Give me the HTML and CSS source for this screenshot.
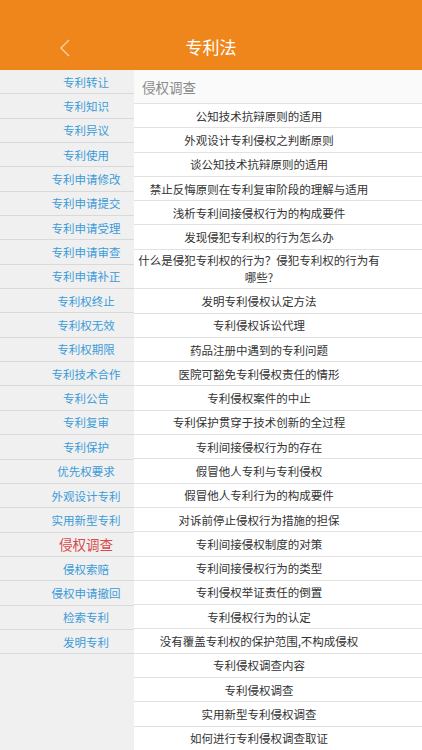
FILE: index.html
```html
<!DOCTYPE html>
<html lang="zh-CN">
<head>
  <meta charset="UTF-8" />
  <title>专利法</title>
  <link rel="stylesheet" href="styles.css">
</head>
<body>
  <div class="topbar">
    <button class="back-btn">
      <svg width="12" height="18" viewBox="0 0 12 18"><polyline points="10,1 2,9 10,17" fill="none" stroke="#f8cf9e" stroke-width="1.4"/></svg>
    </button>
    <div class="title">专利法</div>
  </div>

  <div class="main">
    <!-- 左侧分类 -->
    <div class="sidebar">
      <div class="cat">专利转让</div>
      <div class="cat">专利知识</div>
      <div class="cat">专利异议</div>
      <div class="cat">专利使用</div>
      <div class="cat">专利申请修改</div>
      <div class="cat">专利申请提交</div>
      <div class="cat">专利申请受理</div>
      <div class="cat">专利申请审查</div>
      <div class="cat">专利申请补正</div>
      <div class="cat">专利权终止</div>
      <div class="cat">专利权无效</div>
      <div class="cat">专利权期限</div>
      <div class="cat">专利技术合作</div>
      <div class="cat">专利公告</div>
      <div class="cat">专利复审</div>
      <div class="cat">专利保护</div>
      <div class="cat">优先权要求</div>
      <div class="cat">外观设计专利</div>
      <div class="cat">实用新型专利</div>
      <div class="cat active">侵权调查</div>
      <div class="cat">侵权索赔</div>
      <div class="cat">侵权申请撤回</div>
      <div class="cat">检索专利</div>
      <div class="cat">发明专利</div>
    </div>

    <!-- 右侧文章列表 -->
    <div class="content">
      <div class="section-title">侵权调查</div>
      <div class="item">公知技术抗辩原则的适用</div>
      <div class="item">外观设计专利侵权之判断原则</div>
      <div class="item">谈公知技术抗辩原则的适用</div>
      <div class="item">禁止反悔原则在专利复审阶段的理解与适用</div>
      <div class="item">浅析专利间接侵权行为的构成要件</div>
      <div class="item">发现侵犯专利权的行为怎么办</div>
      <div class="item two-line">什么是侵犯专利权的行为？侵犯专利权的行为有哪些?</div>
      <div class="item">发明专利侵权认定方法</div>
      <div class="item">专利侵权诉讼代理</div>
      <div class="item">药品注册中遇到的专利问题</div>
      <div class="item">医院可豁免专利侵权责任的情形</div>
      <div class="item">专利侵权案件的中止</div>
      <div class="item">专利保护贯穿于技术创新的全过程</div>
      <div class="item">专利间接侵权行为的存在</div>
      <div class="item">假冒他人专利与专利侵权</div>
      <div class="item">假冒他人专利行为的构成要件</div>
      <div class="item">对诉前停止侵权行为措施的担保</div>
      <div class="item">专利间接侵权制度的对策</div>
      <div class="item">专利间接侵权行为的类型</div>
      <div class="item">专利侵权举证责任的倒置</div>
      <div class="item">专利侵权行为的认定</div>
      <div class="item">没有覆盖专利权的保护范围,不构成侵权</div>
      <div class="item">专利侵权调查内容</div>
      <div class="item">专利侵权调查</div>
      <div class="item">实用新型专利侵权调查</div>
      <div class="item">如何进行专利侵权调查取证</div>
    </div>
  </div>
</body>
</html>
```

FILE: styles.css
```css
body {
  margin: 0;
  padding: 0;
  font-family: "Noto Sans CJK SC", "Noto Sans", sans-serif;
  background: #f0f0f0;
  overflow: hidden;
}

.topbar {
  height: 70px;
  background: #ef861c;
  display: flex;
  align-items: center;
  justify-content: center;
  padding-top: 26px;
  box-sizing: border-box;
  position: relative;
}

.back-btn {
  position: absolute;
  left: 59px;
  top: 39px;
  background: none;
  border: none;
  padding: 0;
}

.title {
  color: #ffffff;
  font-size: 17px;
  margin-top: -3px;
}

.main {
  display: flex;
}

.sidebar {
  width: 134px;
  flex-shrink: 0;
  background: #f0f0f0;
}

.cat {
  height: 24.35px;
  box-sizing: border-box;
  border-bottom: 1px solid #d9d9d9;
  padding-left: 38px;
  display: flex;
  align-items: center;
  justify-content: center;
  font-size: 11.5px;
  color: #3b9bd8;
  white-space: nowrap;
}

.cat.active {
  color: #d84a4a;
  font-size: 13.5px;
}

.content {
  flex: 1;
  background: #ffffff;
}

.section-title {
  height: 34px;
  box-sizing: border-box;
  border-bottom: 1px solid #e2e2e2;
  background: #fafafa;
  padding-left: 8px;
  display: flex;
  align-items: center;
  font-size: 13.5px;
  color: #8a8a8a;
}

.item {
  height: 24.3px;
  box-sizing: border-box;
  border-bottom: 1px solid #e2e2e2;
  padding: 0 40px 0 2px;
  display: flex;
  align-items: center;
  justify-content: center;
  text-align: center;
  font-size: 11.5px;
  color: #333333;
}

.item.two-line {
  height: 39.5px;
  line-height: 17px;
}
```
